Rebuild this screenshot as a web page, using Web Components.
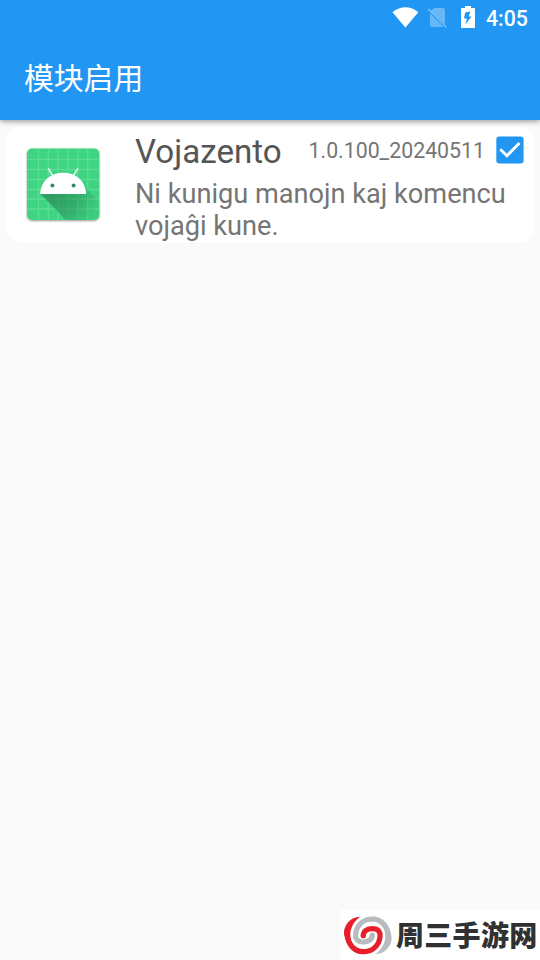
<!DOCTYPE html>
<html lang="zh"><head><meta charset="utf-8"><title>模块启用</title>
<style>html,body{margin:0;height:100%;overflow:hidden}</style></head>
<body><module-app></module-app>
<script>
const define=(name,html)=>{customElements.define(name,class extends HTMLElement{
 constructor(){super();this.attachShadow({mode:'open'}).innerHTML=html}
})};
define('status-bar',`<style>
:host{display:flex;height:36px;box-sizing:border-box;color:#fff;justify-content:flex-end;padding:0 12px 0 0;font:500 21.3px/38px Roboto,sans-serif}
svg{display:block;width:94px;height:36px}.time{width:42px;white-space:nowrap}</style>
<svg viewBox="392 0 94 36"><path d="M392.5 12.2C400.5 5.6 410.5 5.6 418.3 12.2L405.4 27.6Z" fill="#fff"/>
<path d="M434.2 8H443Q445 8 445 10V24.3L430.8 10.8ZM430 13.2L443.7 27H432Q430 27 430 25Z" fill="#fff" opacity=".32"/><path d="M428.3 9L446.5 27.5" stroke="#fff" stroke-width="1.6" opacity=".38"/>
<path fill="#fff" fill-rule="evenodd" d="M465 6H471V8H474Q475 8 475 9V27Q475 28 474 28H462Q461 28 461 27V9Q461 8 462 8H465ZM470.3 11.5L465.2 12.5L464 18.5H467L465.3 24.5L471.6 16.5H468.6Z"/></svg><span class="time"><slot></slot></span>`);
define('app-bar',`<style>:host{display:flex;height:84px;box-sizing:border-box;padding:0 24px 5px;align-items:center;color:#fff;font:400 29.8px/44px "Noto Sans CJK SC",sans-serif}</style><span><slot></slot></span>`);
define('app-icon',`<style>:host{display:block;width:78px;height:80px}svg{display:block}</style>
<svg width="78" height="80" viewBox="24 145 78 80"><defs><filter id="s" x="-10%" y="-10%" width="120%" height="125%"><feDropShadow dx="0" dy="1" stdDeviation="0.9" flood-opacity=".4"/></filter><clipPath id="c"><rect x="27" y="148" width="72.5" height="72" rx="5"/></clipPath><radialGradient id="g" gradientUnits="userSpaceOnUse" cx="52" cy="190" r="50"><stop stop-color="#247e4e" stop-opacity=".7"/><stop offset=".55" stop-color="#247e4e" stop-opacity=".45"/><stop offset="1" stop-color="#247e4e" stop-opacity=".05"/></radialGradient></defs>
<rect x="27" y="148.5" width="72.3" height="71.5" rx="5" fill="#3dd581" filter="url(#s)"/>
<g clip-path="url(#c)"><path d="M38.5 148V220M48.3 148V220M58.2 148V220M68 148V220M77.8 148V220M87.7 148V220M27 159.5H100M27 169.5H100M27 179.5H100M27 189.5H100M27 199H100M27 209H100" stroke="#77e4a6" stroke-width="1.3" opacity=".55"/><path d="M40.5 194H86V188L99.5 201.500V220H66Z" fill="url(#g)"/></g>
<path d="M40.2 194C41.3 166 85 165.500 86 194Z" fill="#fff"/><path d="M48.5 168.8L52.8 176M77.5 168.8L73.2 176" stroke="#e2faeb" stroke-width="1.6" stroke-linecap="round"/><circle cx="52.4" cy="185.4" r="2" fill="#358b60"/><circle cx="73.6" cy="185.4" r="2" fill="#358b60"/></svg>`);
define('check-box',`<style>:host{display:block;width:28px;height:28px}svg{display:block}</style><svg width="28" height="28" viewBox="0 0 28 28"><rect x=".3" y=".4" width="27.3" height="27.2" rx="3" fill="#2196f3"/><path d="M4.3 13.3L10.9 19.8L23.5 6.9" fill="none" stroke="#fff" stroke-width="2.9"/></svg>`);
define('module-card',`<style>
:host{display:flex;height:117px;margin:0 6px;box-sizing:border-box;padding:0 10px 0 18px;border-radius:15px;background:#fff;font-family:Roboto,sans-serif;color:#757575}
app-icon{margin-top:19px;flex:none}.body{flex:1;margin-left:33px;min-width:0}.top{display:flex;align-items:center;height:52px}.name{font-size:33.15px;line-height:40px;color:#555;white-space:nowrap}.version{font-size:21.3px;line-height:28px;margin:-3px 11px 0 auto;white-space:nowrap}check-box{margin-top:-4px}.desc{font-size:27.17px;line-height:32px;white-space:nowrap}</style>
<app-icon></app-icon><div class="body"><div class="top"><span class="name"><slot name="name"></slot></span><span class="version"><slot name="version"></slot></span><check-box></check-box></div><div class="desc"><slot></slot></div></div>`);
define('site-mark',`<style>:host{display:flex;width:200px;height:50px;box-sizing:border-box;padding-left:2px;background:#fff;align-items:center;color:#303133;font:900 28px/40px "Noto Sans CJK SC",sans-serif;letter-spacing:.3px}svg{flex:none}.t{margin-left:4px;margin-top:-2px;white-space:nowrap}</style>
<svg width="50" height="40" viewBox="36 43 150 120"><defs><g id="arm"><path d="M100 106C99 91 113 84 127 84C145 84 152 95 150 108C147 138 124 153 100 153C72 152 54 130 52 105" fill="none" stroke="currentColor" stroke-width="15.5"/><circle cx="100" cy="105" r="7.75" fill="currentColor"/><path d="M91 48C55 48 36 84 44 108C54 142 72 160 98 160.700L98 148C75 144 61 126 61 102C61 80 73 60 91 48Z" fill="currentColor"/></g></defs><use href="#arm" color="#b8bcbf" transform="rotate(180 113.5 104)"/><use href="#arm" color="#e71f2b"/></svg><span class="t"><slot></slot></span>`);
define('module-app',`<style>:host{display:flex;flex-direction:column;width:540px;height:960px;background:#fafafa}
header{background:#2196f3;height:120px;box-shadow:0 1px 6px rgba(0,0,0,.45);z-index:1;flex:none}main{flex:1;padding-top:6px}footer{display:flex;justify-content:flex-end}</style>
<header><status-bar>4:05</status-bar><app-bar>模块启用</app-bar></header>
<main><module-card><span slot="name">Vojazento</span><span slot="version">1.0.100_20240511</span>Ni kunigu manojn kaj komencu<br>vojaĝi kune.</module-card></main><footer><site-mark>周三手游网</site-mark></footer>`);
</script></body></html>
